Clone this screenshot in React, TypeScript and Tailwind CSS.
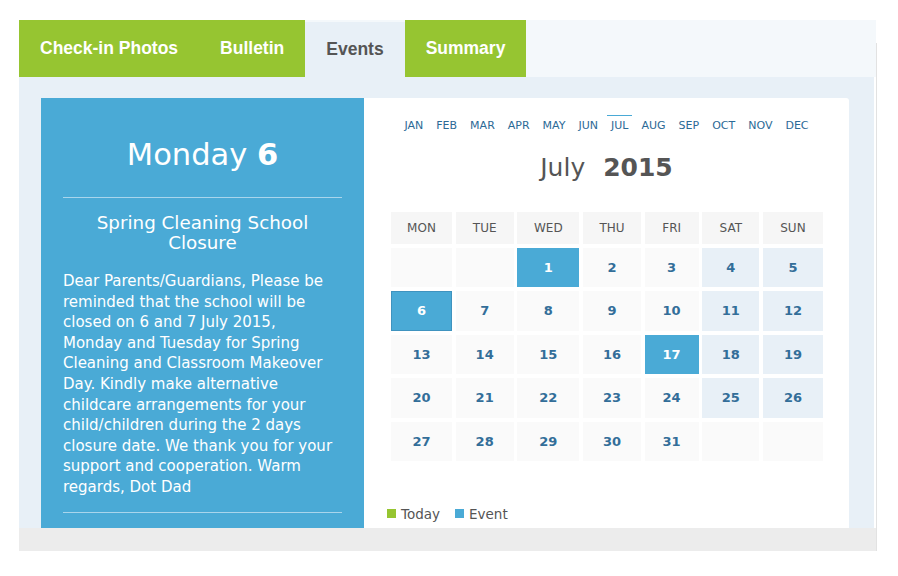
import React from 'react';

const tabs = ['Check-in Photos', 'Bulletin', 'Events', 'Summary'];
const months = ['JAN', 'FEB', 'MAR', 'APR', 'MAY', 'JUN', 'JUL', 'AUG', 'SEP', 'OCT', 'NOV', 'DEC'];
const weekdays = ['MON', 'TUE', 'WED', 'THU', 'FRI', 'SAT', 'SUN'];
const events = [1, 6, 17];
const selected = 6;

const message = [
'Dear Parents/Guardians, Please be',
'reminded that the school will be',
'closed on 6 and 7 July 2015,',
'Monday and Tuesday for Spring',
'Cleaning and Classroom Makeover',
'Day. Kindly make alternative',
'childcare arrangements for your',
'child/children during the 2 days',
'closure date. We thank you for your',
'support and cooperation. Warm',
'regards, Dot Dad'];


// July 2015 starts on a Wednesday
const cells: (number | null)[] = [null, null];
for (let d = 1; d <= 31; d++) cells.push(d);
while (cells.length < 35) cells.push(null);

const font = { fontFamily: '"DejaVu Sans", Verdana, sans-serif' };

function DayCell({ day, col }: { day: number | null; col: number }) {
  const weekend = col >= 5;
  let cls = 'bg-[#fafafa]';
  if (day != null && events.includes(day)) cls = 'bg-[#4aaad6] text-white';
  else if (day != null && weekend) cls = 'bg-[#e8f0f7] text-[#336e99]';
  else cls = 'bg-[#fafafa] text-[#336e99]';
  const border = day === selected ? 'border border-[#3f93bf]' : '';
  return (
    <div className={`flex items-center justify-center text-[13px] font-bold ${cls} ${border}`}>
      {day ?? ''}
    </div>);

}

export default function App() {
  return (
    <div className="min-h-[576px] bg-white pt-[20px] pl-[19px]" style={font}>
      <div className="relative w-[858px]">
        {/* Tabs */}
        <div className="flex h-[57px] w-[857px] bg-[#f4f8fb]">
          {tabs.map((t) =>
          t === 'Events' ?
          <div
            key={t}
            className="mt-[2px] flex items-center bg-[#e8f0f7] px-[21px] text-[17.5px] font-bold text-[#555555]"
            style={{ fontFamily: '"Liberation Sans", Arial, sans-serif' }}>
                {t}
              </div> :

          <div
            key={t}
            className="flex items-center bg-[#96c531] px-[21px] text-[17.5px] font-bold text-white"
            style={{ fontFamily: '"Liberation Sans", Arial, sans-serif' }}>
                {t}
              </div>

          )}
        </div>

        {/* Content */}
        <div className="flex h-[451px] w-[855px] overflow-hidden bg-[#e8f0f7] pt-[21px] pl-[22px] pr-[25px]">
          {/* Event detail */}
          <div className="w-[323px] shrink-0 bg-[#4aaad6] px-[22px] pt-[39px] text-white">
            <div className="text-center text-[30.5px] leading-[36px]">
              Monday <span className="font-bold">6</span>
            </div>
            <div className="mt-[24px] h-px bg-[#a9d5ec]" />
            <div className="mt-[15px] text-center text-[18.3px] leading-[20px]">
              Spring Cleaning School
              <br />
              Closure
            </div>
            <p className="mt-[18px] whitespace-nowrap text-[15px] leading-[20.6px]">
              {message.map((line, i) =>
              <React.Fragment key={i}>
                  {line}
                  {i < message.length - 1 && <br />}
                </React.Fragment>
              )}
            </p>
            <div className="mt-[14px] h-px bg-[#a9d5ec]" />
          </div>

          {/* Calendar */}
          <div className="w-[485px] shrink-0 rounded-tr-[3px] bg-white pt-[17px]">
            <div className="flex justify-center gap-[5px]">
              {months.map((m) =>
              <div
                key={m}
                className={`border-t px-[4px] pt-[3px] text-[11px] leading-[14px] text-[#2c6a96] ${m === 'JUL' ? 'border-[#4aaad6]' : 'border-transparent'}`}>
                  {m}
                </div>
              )}
            </div>

            <div className="mt-[20px] text-center text-[25px] leading-[30px] text-[#555555]">
              July<span className="ml-[18px] font-bold">2015</span>
            </div>

            <div className="mt-[29px] px-[27px]">
              <div className="grid grid-cols-[61px_58px_62px_58px_54px_57px_60px] gap-x-[3.67px] gap-y-[4px]">
                {weekdays.map((w) =>
                <div
                  key={w}
                  className="flex h-[32px] items-center justify-center bg-[#f6f6f6] text-[12px] text-[#555555]">
                    {w}
                  </div>
                )}
              </div>
              <div className="mt-[4px] grid auto-rows-[39.4px] grid-cols-[61px_58px_62px_58px_54px_57px_60px] gap-x-[3.67px] gap-y-[4px]">
                {cells.map((d, i) =>
                <DayCell key={i} day={d} col={i % 7} />
                )}
              </div>
            </div>

            <div className="mt-[44px] flex items-center pl-[23px] text-[13.5px] leading-[18px] text-[#555555]">
              <span className="mr-[5px] h-[9px] w-[9px] bg-[#96c531]" />
              Today
              <span className="ml-[15px] mr-[5px] h-[9px] w-[9px] bg-[#4aaad6]" />
              Event
            </div>
          </div>
        </div>

        {/* Footer strip */}
        <div className="h-[23px] w-[858px] bg-[#ececec]" />

        {/* right edge shadow */}
        <div className="absolute right-0 top-[23px] bottom-0 w-px bg-[#e2e2e2]" />
      </div>
    </div>);

}
